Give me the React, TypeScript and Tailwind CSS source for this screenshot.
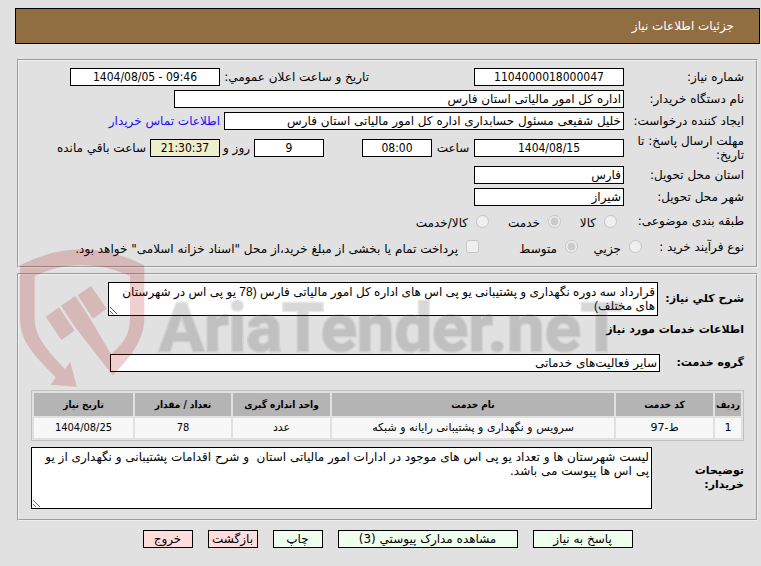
import clsx from 'clsx'
import type { ReactNode } from 'react'

const services = [
  {
    row: '1',
    code: 'ط-97',
    name: 'سرویس و نگهداری و پشتیبانی رایانه و شبکه',
    unit: 'عدد',
    count: '78',
    date: '1404/08/25',
  },
]

const columns = [
  { title: 'ردیف', className: 'w-[26px]' },
  { title: 'کد خدمت', className: 'w-[97px]' },
  { title: 'نام خدمت', className: '' },
  { title: 'واحد اندازه گیری', className: 'w-[97px]' },
  { title: 'تعداد / مقدار', className: 'w-[96px]' },
  { title: 'تاریخ نیاز', className: 'w-[99px]' },
]

interface FieldProps {
  id: string
  value: string
  className: string
  numeric?: boolean
}

function Field({ id, value, className, numeric }: FieldProps) {
  return (
    <input
      id={id}
      type="text"
      readOnly
      dir={numeric ? 'ltr' : 'rtl'}
      defaultValue={value}
      className={clsx(
        'h-[18px] min-w-0 border border-black px-0.5',
        numeric && "text-center font-['DejaVu_Sans_Condensed','DejaVu_Sans',sans-serif]",
        className
      )}
    />
  )
}

function Row({ label, htmlFor, className, children }: { label: string; htmlFor?: string; className: string; children: ReactNode }) {
  return (
    <div className={clsx('flex items-center', className)}>
      {htmlFor ? (
        <label htmlFor={htmlFor} className="w-[120px] shrink-0 pl-1">{label}</label>
      ) : (
        <span className="w-[120px] shrink-0 pl-1">{label}</span>
      )}
      {children}
    </div>
  )
}

function Choice({ name, label, checked, className }: { name: string; label: string; checked?: boolean; className?: string }) {
  return (
    <label className={clsx('flex shrink-0 items-center gap-2 whitespace-nowrap', className)}>
      <input type="radio" name={name} disabled defaultChecked={checked} className="size-[13px]" />
      <span className="pt-1">{label}</span>
    </label>
  )
}

function ActionButton({ children, className }: { children: ReactNode; className: string }) {
  return (
    <button type="button" className={clsx('h-[18px] shrink-0 border border-black whitespace-nowrap', className)}>
      {children}
    </button>
  )
}

function Watermark() {
  return (
    <svg
      viewBox="0 0 630 150"
      className="pointer-events-none absolute top-[240px] left-[10px] h-[150px] w-[630px]"
      direction="ltr"
      aria-hidden="true"
    >
      <g transform="scale(0.3333)" fill="#af1418" fillOpacity="0.2">
        <path d="M30 76 Q215 -20 403 76 V235 C403 305 352 362 308 406 L200 268 L243 240 L303 343 C340 310 360 285 360 235 V108 Q215 42 74 108 V235 C74 290 110 330 165 387 L181 365 L200 440 L122 434 L137 412 C80 352 30 310 30 235 Z" />
        <path d="M107 230 L147 202 L194 272 L154 300 Z" />
        <path d="M153 197 L196 168 L243 240 L200 268 Z" />
        <path d="M203 166 L243 138 L290 206 L249 236 Z" />
      </g>
      <text
        x="149"
        y="111"
        fontFamily="Roboto, 'Liberation Sans', sans-serif"
        fontWeight="700"
        fontSize="67"
        fill="#414141"
        stroke="#909090"
        strokeWidth="3"
        strokeLinejoin="round"
        paintOrder="stroke"
        opacity="0.2"
      >
        AriaTender.neT
      </text>
    </svg>
  )
}

export default function App() {
  return (
    <div
      dir="rtl"
      className="relative min-h-screen bg-[#e1e1e1] pt-2 pr-px pb-4 pl-[15px] font-['DejaVu_Sans',sans-serif] text-xs leading-[14px] text-black"
    >
      <h1 className="flex h-9 items-center border border-black bg-[#906e42] pr-[25px] text-white">
        جزئیات اطلاعات نیاز
      </h1>

      {/* Need info */}
      <section className="mx-[2px] mt-[15px] border-2 border-[#f0f0f0] pt-[5px] pr-[12px] pb-[7px] [border-style:groove]">
        <Row label="شماره نیاز:" htmlFor="number" className="h-[22px]">
          <Field id="number" numeric value="1104000018000047" className="w-[150px] bg-white" />
          <label htmlFor="announce" className="mr-[105px] w-[149px] shrink-0 whitespace-nowrap">
            تاریخ و ساعت اعلان عمومي:
          </label>
          <Field id="announce" numeric value="1404/08/05 - 09:46" className="w-[150px] bg-white" />
        </Row>
        <Row label="نام دستگاه خریدار:" htmlFor="buyer" className="h-[22px]">
          <Field id="buyer" value="اداره کل امور مالیاتی استان فارس" className="w-[450px] bg-white" />
        </Row>
        <Row label="ایجاد کننده درخواست:" htmlFor="creator" className="h-[22px]">
          <Field id="creator" value="خلیل شفیعی مسئول حسابداری اداره کل امور مالیاتی استان فارس" className="w-[400px] bg-white" />
          <a href="#contact" className="mr-1 whitespace-nowrap text-[#1a0dff]">اطلاعات تماس خریدار</a>
        </Row>
        <Row label="مهلت ارسال پاسخ: تا تاریخ:" htmlFor="deadline" className="h-8">
          <Field id="deadline" numeric value="1404/08/15" className="w-[150px] bg-white" />
          <label htmlFor="hour" className="w-[42px] shrink-0 text-center">ساعت</label>
          <Field id="hour" numeric value="08:00" className="w-[70px] bg-white" />
          <Field id="days" numeric value="9" className="mr-[38px] w-[70px] bg-white" />
          <label htmlFor="days" className="w-[34px] shrink-0 pr-1 whitespace-nowrap">روز و</label>
          <Field id="remaining" numeric value="21:30:37" className="w-[70px] bg-[#eeeecc]" />
          <label htmlFor="remaining" className="mr-1 whitespace-nowrap">ساعت باقي مانده</label>
        </Row>
        <Row label="استان محل تحویل:" htmlFor="province" className="h-[22px]">
          <Field id="province" value="فارس" className="w-[150px] bg-white" />
        </Row>
        <Row label="شهر محل تحویل:" htmlFor="city" className="h-[22px]">
          <Field id="city" value="شیراز" className="w-[150px] bg-white" />
        </Row>
        <Row label="طبقه بندی موضوعی:" className="h-[26px]">
          <Choice name="category" label="کالا" className="mr-[7px] w-[56px]" />
          <Choice name="category" label="خدمت" checked className="w-[72px]" />
          <Choice name="category" label="کالا/خدمت" />
        </Row>
        <Row label="نوع فرآیند خرید :" className="h-[25px]">
          <Choice name="process" label="جزیي" className="-mr-[18px] w-[64px]" />
          <Choice name="process" label="متوسط" checked className="w-[99px]" />
          <label className="flex items-center gap-2 whitespace-nowrap">
            <input type="checkbox" disabled className="size-[13px]" />
            <span className="pt-1">پرداخت تمام یا بخشی از مبلغ خرید،از محل "اسناد خزانه اسلامی" خواهد بود.</span>
          </label>
        </Row>
      </section>

      {/* Services */}
      <section className="mx-[2px] mt-[5px] border-2 border-[#f0f0f0] px-[12px] pt-[7px] pb-[10px] [border-style:groove]">
        <div className="flex items-center">
          <label htmlFor="summary" className="w-[86px] shrink-0 text-[11px] font-bold whitespace-nowrap">شرح کلي نیاز:</label>
          <textarea
            id="summary"
            readOnly
            className="block h-[34px] w-[550px] border border-black bg-white p-0.5 font-['Liberation_Sans','DejaVu_Sans',sans-serif]"
            defaultValue="قرارداد سه دوره نگهداری و پشتیبانی یو پی اس های اداره کل امور مالیاتی فارس (78 یو پی اس در شهرستان های مختلف)"
          />
        </div>
        <h2 className="mt-[7px] text-[11px] leading-[14px] font-bold">اطلاعات خدمات مورد نیاز</h2>
        <div className="mt-[17px] flex items-center">
          <label htmlFor="group" className="w-[84px] shrink-0 text-[11px] font-bold">گروه خدمت:</label>
          <Field id="group" value="سایر فعالیت‌های خدماتی" className="w-[550px] bg-white" />
        </div>

        <table className="mt-[18px] w-full table-fixed border-separate border-spacing-[2px] border border-[#c0c0c0] text-center text-[11px]">
          <thead className="font-['DejaVu_Sans_Condensed','DejaVu_Sans',sans-serif] text-[10px]">
            <tr className="h-[23px] bg-[#b4b4b4]">
              {columns.map((col) => (
                <th key={col.title} scope="col" className={clsx('whitespace-nowrap', col.className)}>{col.title}</th>
              ))}
            </tr>
          </thead>
          <tbody>
            {services.map((service) => (
              <tr key={service.row} className="h-5 bg-[#f7f7f7]">
                <td>{service.row}</td>
                <td>{service.code}</td>
                <td>{service.name}</td>
                <td>{service.unit}</td>
                <td className="font-['DejaVu_Sans_Condensed','DejaVu_Sans',sans-serif]">{service.count}</td>
                <td className="font-['DejaVu_Sans_Condensed','DejaVu_Sans',sans-serif]">{service.date}</td>
              </tr>
            ))}
          </tbody>
        </table>

        <div className="mt-1.5 flex items-center">
          <label htmlFor="notes" className="w-[92px] shrink-0 pl-8 text-[11px] font-bold">توضیحات خریدار:</label>
          <textarea
            id="notes"
            readOnly
            className="block h-[62px] min-w-0 flex-1 border border-black bg-white p-0.5"
            defaultValue="لیست شهرستان ها و تعداد یو پی اس های موجود در ادارات امور مالیاتی استان  و شرح اقدامات پشتیبانی و نگهداری از یو پی اس ها پیوست می باشد."
          />
        </div>
      </section>

      {/* Actions */}
      <div className="mt-[9px] flex justify-center gap-[15px]">
        <ActionButton className="w-[100px] bg-[#eeffee]">پاسخ به نیاز</ActionButton>
        <ActionButton className="w-[180px] bg-[#eeffee]">مشاهده مدارک پیوستي (3)</ActionButton>
        <ActionButton className="w-[50px] bg-[#eeffee]">چاپ</ActionButton>
        <ActionButton className="w-[50px] bg-[#ffdddd]">بازگشت</ActionButton>
        <ActionButton className="w-[50px] bg-[#ffdddd]">خروج</ActionButton>
      </div>

      <Watermark />
    </div>
  )
}
